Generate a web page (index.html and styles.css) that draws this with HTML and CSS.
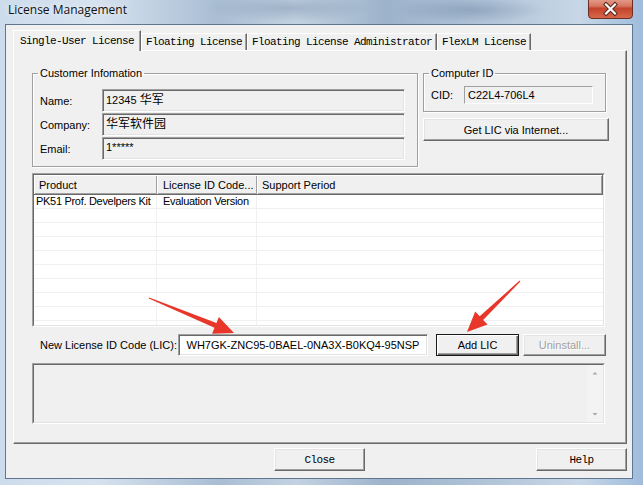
FILE: index.html
```html
<!DOCTYPE html>
<html>
<head>
<meta charset="utf-8">
<title>License Management</title>
<link rel="stylesheet" href="styles.css">
</head>
<body>
<div class="window">
  <div class="titlebar">
    <span class="title">License Management</span>
    <svg class="closebox" width="45" height="19" viewBox="0 0 45 19">
      <defs>
        <linearGradient id="cg" x1="0" y1="0" x2="0" y2="1">
          <stop offset="0" stop-color="#eab1a2"/>
          <stop offset="0.45" stop-color="#d6755f"/>
          <stop offset="0.55" stop-color="#c3432b"/>
          <stop offset="1" stop-color="#d86a4c"/>
        </linearGradient>
      </defs>
      <rect x="0.5" y="-4" width="44" height="22.5" rx="3.5" fill="url(#cg)" stroke="#6b2d24"/>
      <path d="M18 4.5 L27 13.5 M27 4.5 L18 13.5" stroke="#5a261e" stroke-width="4.2" stroke-linecap="square"/>
      <path d="M18 4.5 L27 13.5 M27 4.5 L18 13.5" stroke="#ffffff" stroke-width="2.2" stroke-linecap="square"/>
    </svg>
  </div>
  <div class="frame">
    <div class="client">
      <div class="tabctl">
        <div class="tabstrip">
          <div class="tab active">Single-User License</div>
          <div class="tab">Floating License</div>
          <div class="tab">Floating License Administrator</div>
          <div class="tab">FlexLM License</div>
        </div>
        <div class="page">
          <div class="toprow">
            <fieldset class="group customer">
              <legend>Customer Infomation</legend>
              <div class="fields">
                <span class="flabel">Name:</span>
                <div class="edit ro">12345 <span class="cjk">华军</span></div>
                <span class="flabel">Company:</span>
                <div class="edit ro"><span class="cjk">华军软件园</span></div>
                <span class="flabel">Email:</span>
                <div class="edit ro">1*****</div>
              </div>
            </fieldset>
            <div class="rightcol">
              <fieldset class="group computer">
                <legend>Computer ID</legend>
                <div class="cidrow">
                  <span class="cidlabel">CID:</span>
                  <div class="edit cid">C22L4-706L4</div>
                </div>
              </fieldset>
              <div class="btn getlic">Get LIC via Internet...</div>
            </div>
          </div>

          <div class="listview">
            <div class="lv-inner">
              <div class="lv-head">
                <div class="hcell c1">Product</div>
                <div class="hcell c2">License ID Code...</div>
                <div class="hcell c3">Support Period</div>
              </div>
              <div class="lv-row">
                <div class="cell c1">PK51 Prof. Develpers Kit</div>
                <div class="cell c2">Evaluation Version</div>
                <div class="cell c3"></div>
              </div>
              <div class="lv-row"><div class="cell c1"></div><div class="cell c2"></div><div class="cell c3"></div></div>
              <div class="lv-row"><div class="cell c1"></div><div class="cell c2"></div><div class="cell c3"></div></div>
              <div class="lv-row"><div class="cell c1"></div><div class="cell c2"></div><div class="cell c3"></div></div>
              <div class="lv-row"><div class="cell c1"></div><div class="cell c2"></div><div class="cell c3"></div></div>
              <div class="lv-row"><div class="cell c1"></div><div class="cell c2"></div><div class="cell c3"></div></div>
              <div class="lv-row"><div class="cell c1"></div><div class="cell c2"></div><div class="cell c3"></div></div>
              <div class="lv-row"><div class="cell c1"></div><div class="cell c2"></div><div class="cell c3"></div></div>
              <div class="lv-row"><div class="cell c1"></div><div class="cell c2"></div><div class="cell c3"></div></div>
              <div class="lv-row"><div class="cell c1"></div><div class="cell c2"></div><div class="cell c3"></div></div>
            </div>
          </div>

          <div class="licrow">
            <span class="liclabel">New License ID Code (LIC):</span>
            <div class="edit licedit">WH7GK-ZNC95-0BAEL-0NA3X-B0KQ4-95NSP</div>
            <div class="btn default addlic">Add LIC</div>
            <div class="btn disabled uninstall">Uninstall...</div>
          </div>

          <div class="status">
            <div class="status-inner">
              <div class="statustext"></div>
              <div class="vscroll">
                <svg width="16" height="16" viewBox="0 0 16 16"><path d="M5.5 9.5 L8 7 L10.5 9.5 Z" fill="#a8a8a8"/></svg>
                <svg width="16" height="16" viewBox="0 0 16 16"><path d="M5.5 7 L8 9.5 L10.5 7 Z" fill="#a8a8a8"/></svg>
              </div>
            </div>
          </div>
        </div>
      </div>
      <div class="footer">
        <div class="btn mono close">Close</div>
        <div class="btn mono help">Help</div>
      </div>
    </div>
  </div>

  <svg class="annot" width="643" height="485" viewBox="0 0 643 485">
    <polygon fill="#e8362b" points="149.2,297.5 216.5,323.1 218.9,317.1 234,333 212.1,333.7 214.5,327.7 148.8,298.5"/>
    <polygon fill="#e8362b" points="519.6,280.6 479.7,316.3 475.2,311.6 467,332 487.6,324.6 483.1,319.9 520.4,281.4"/>
  </svg>
</div>
</body>
</html>
```

FILE: styles.css
```css
* { box-sizing: border-box; }

body {
  margin: 0;
  background: #ffffff;
  font-family: "Liberation Sans", Arial, sans-serif;
  font-size: 11px;
  color: #000;
}

.window {
  position: relative;
  width: 643px;
  height: 485px;
  overflow: hidden;
  display: flex;
  flex-direction: column;
  background: linear-gradient(90deg, #cddcec 0%, #d6e2ef 15%, #a9bdd3 34%, #c3d2e2 46%, #9db3cb 60%, #b1c4d8 76%, #c8d7e7 90%, #9fbcdc 100%);
}

.titlebar {
  height: 24px;
  display: flex;
  align-items: flex-start;
  padding-left: 8px;
  background:
    radial-gradient(ellipse 120px 20px at 290px 8px, rgba(120,145,172,0.45), rgba(120,145,172,0) 70%),
    radial-gradient(ellipse 110px 18px at 470px 10px, rgba(110,135,165,0.45), rgba(110,135,165,0) 70%);
}

.title {
  font-family: "Open Sans", "Noto Sans", sans-serif;
  font-size: 12px;
  line-height: 20px;
  color: #111;
  text-shadow: 0 0 6px rgba(255,255,255,0.9);
}

.closebox {
  margin-left: auto;
  margin-right: 10px;
  display: block;
}

.frame {
  flex: 1;
  display: flex;
  padding: 0 10px 6px 5px;
}

.client {
  flex: 1;
  display: flex;
  flex-direction: column;
  background: #f0f0f0;
  border: 1px solid #5f7590;
}

.tabctl {
  margin: 5px 5px 0 7px;
}

.tabstrip {
  display: flex;
  align-items: flex-end;
  height: 20px;
}

.tab {
  font-family: "Liberation Mono", "DejaVu Sans Mono", monospace;
  font-size: 11px;
  letter-spacing: -0.6px;
  height: 17px;
  display: flex;
  align-items: center;
  padding: 0 4px 0 4px;
  border-left: 1px solid #ffffff;
  border-top: 1px solid #ffffff;
  border-right: 1px solid #696969;
  box-shadow: inset -1px 0 0 #a0a0a0;
  background: #f0f0f0;
  white-space: nowrap;
}

.tab.active {
  position: relative;
  z-index: 1;
  height: 21px;
  margin-bottom: -1px;
  padding: 0 6px 1px 6px;
}

.page {
  height: 394px;
  border-top: 1px solid #ffffff;
  border-left: 1px solid #ffffff;
  border-right: 1px solid #696969;
  border-bottom: 1px solid #696969;
  box-shadow: inset -1px -1px 0 #a0a0a0;
  padding: 16px 0 0 18px;
}

.toprow {
  display: flex;
  gap: 5px;
  align-items: flex-start;
}

.group {
  margin: 0;
  border: 1px solid #a0a0a0;
  box-shadow: inset 1px 1px 0 #ffffff, 1px 1px 0 #ffffff;
  min-width: 0;
}

.group legend {
  padding: 0 2px;
  margin-left: -2px;
  line-height: 13px;
  font-size: 11px;
}

.customer {
  width: 386px;
  padding: 9px 12px 6px 7px;
}

.fields {
  display: grid;
  grid-template-columns: 62px 1fr;
  row-gap: 1px;
  align-items: center;
}

.flabel {
  color: #000;
}

.edit {
  height: 23px;
  border-style: solid;
  border-width: 1px;
  border-color: #a0a0a0 #ffffff #ffffff #a0a0a0;
  box-shadow: inset 1px 1px 0 #696969, inset -1px -1px 0 #e3e3e3;
  padding: 2px 3px 0 3px;
  line-height: 14px;
  white-space: nowrap;
  overflow: hidden;
}

.edit.ro {
  background: #f0f0f0;
}

.cjk {
  font-family: "Noto Sans CJK SC", sans-serif;
  font-size: 12px;
  line-height: 14px;
}

.rightcol {
  width: 186px;
  display: flex;
  flex-direction: column;
}

.computer {
  width: 183px;
  padding: 6px 12px 7px 7px;
}

.cidrow {
  display: flex;
  align-items: center;
}

.cidlabel {
  width: 33px;
}

.edit.cid {
  flex: 1;
  height: 18px;
  padding-top: 1px;
  background: #f0f0f0;
  border-color: #a0a0a0 #ffffff #ffffff #a0a0a0;
  box-shadow: none;
  line-height: 14px;
}

.btn {
  display: flex;
  align-items: center;
  justify-content: center;
  height: 23px;
  background: #f0f0f0;
  border-style: solid;
  border-width: 1px;
  border-color: #ffffff #696969 #696969 #ffffff;
  box-shadow: inset -1px -1px 0 #a0a0a0, inset 1px 1px 0 #e3e3e3;
  white-space: nowrap;
}

.getlic {
  margin-top: 6px;
  width: 186px;
}

.btn.default {
  border: 1px solid #1a1a1a;
  box-shadow: inset 1px 1px 0 #ffffff, inset -1px -1px 0 #696969, inset -2px -2px 0 #a0a0a0;
}

.btn.disabled {
  color: #a0a0a0;
  text-shadow: 1px 1px 0 #ffffff;
}

.listview {
  width: 573px;
  height: 154px;
  margin-top: 6px;
  border-style: solid;
  border-width: 1px;
  border-color: #a0a0a0 #ffffff #ffffff #a0a0a0;
}

.lv-inner {
  height: 100%;
  border-style: solid;
  border-width: 1px;
  border-color: #696969 #e3e3e3 #e3e3e3 #696969;
  background: #ffffff;
  overflow: hidden;
}

.lv-head,
.lv-row {
  display: grid;
  grid-template-columns: 123px 100px 1fr;
}

.lv-head {
  height: 20px;
}

.hcell {
  background: #f0f0f0;
  box-shadow: inset 1px 1px 0 #ffffff, inset -1px -1px 0 #a0a0a0;
  border-bottom: 1px solid #696969;
  display: flex;
  align-items: center;
  padding-left: 5px;
  white-space: nowrap;
  overflow: hidden;
}

.hcell.c2 { padding-left: 6px; }
.hcell.c3 { border-right: 1px solid #696969; }

.lv-row {
  height: 14px;
}

.cell {
  border-bottom: 1px solid #f0f0f0;
  border-right: 1px solid #f0f0f0;
  line-height: 13px;
  padding-left: 6px;
  white-space: nowrap;
  overflow: hidden;
  letter-spacing: -0.3px;
}

.cell.c1 { padding-left: 2px; }
.cell.c3 { border-right: none; }

.licrow {
  display: flex;
  align-items: center;
  margin-top: 7px;
  height: 22px;
}

.liclabel {
  width: 146px;
  padding-left: 8px;
}

.edit.licedit {
  width: 250px;
  height: 22px;
  background: #ffffff;
  text-align: center;
  padding-top: 3px;
}

.addlic {
  width: 83px;
  height: 22px;
  margin-left: 8px;
}

.uninstall {
  width: 83px;
  height: 22px;
  margin-left: 4px;
}

.status {
  width: 573px;
  height: 61px;
  margin-top: 7px;
  border-style: solid;
  border-width: 1px;
  border-color: #a0a0a0 #ffffff #ffffff #a0a0a0;
}

.status-inner {
  height: 100%;
  display: flex;
  border-style: solid;
  border-width: 1px;
  border-color: #696969 #e3e3e3 #e3e3e3 #696969;
  background: #f0f0f0;
}

.statustext {
  flex: 1;
}

.vscroll {
  width: 16px;
  display: flex;
  flex-direction: column;
  justify-content: space-between;
  background: #f3f3f3;
}

.vscroll svg {
  display: block;
}

.footer {
  display: flex;
  margin-top: 4px;
  padding: 0 5px 0 268px;
}

.btn.mono {
  font-family: "Liberation Mono", "DejaVu Sans Mono", monospace;
  font-size: 11px;
  letter-spacing: -0.6px;
  width: 91px;
  height: 23px;
}

.help {
  margin-left: auto;
}

.annot {
  position: absolute;
  left: 0;
  top: 0;
  pointer-events: none;
}
```
